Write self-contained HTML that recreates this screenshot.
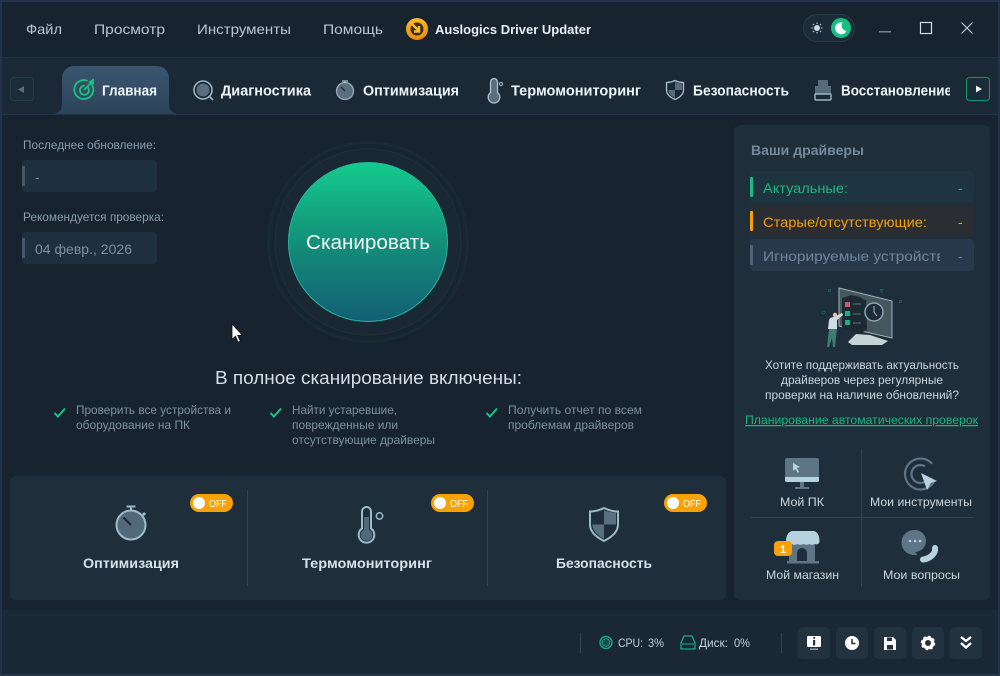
<!DOCTYPE html>
<html lang="ru"><head><meta charset="utf-8"><title>Auslogics Driver Updater</title>
<style>
html,body{margin:0;padding:0;background:#17232e;overflow:hidden}
svg{display:block}
text{font-family:"Liberation Sans",sans-serif;white-space:pre}
</style></head><body>
<svg width="1000" height="676" viewBox="0 0 1000 676" xmlns="http://www.w3.org/2000/svg">
<defs>
<linearGradient id="scan" x1="0" y1="0" x2="0" y2="1"><stop offset="0" stop-color="#14cb8c"/><stop offset="0.55" stop-color="#138a78"/><stop offset="1" stop-color="#135f74"/></linearGradient>
<linearGradient id="tab" x1="0" y1="0" x2="0" y2="1"><stop offset="0" stop-color="#3a5670"/><stop offset="1" stop-color="#2c4459"/></linearGradient>
<linearGradient id="logo" x1="0" y1="0" x2="0" y2="1"><stop offset="0" stop-color="#fdb927"/><stop offset="1" stop-color="#ef8a0c"/></linearGradient>
<clipPath id="c1"><rect x="760" y="240" width="180" height="30"/></clipPath>
<clipPath id="c2"><rect x="835" y="75" width="115" height="30"/></clipPath>
</defs>
<rect width="1000" height="676" fill="#17232e"/>
<!-- tab strip -->
<rect x="0" y="58" width="1000" height="57" fill="#1b2937"/>
<rect x="0" y="57" width="1000" height="1" fill="#213241"/>
<rect x="0" y="114" width="1000" height="1" fill="#213241"/>
<!-- footer -->
<rect x="0" y="610" width="1000" height="66" fill="#1a2734"/>
<!-- window border -->
<rect x="0" y="0" width="1000" height="2" fill="#22324a"/>
<rect x="0" y="0" width="2" height="676" fill="#22324a"/>
<rect x="998" y="0" width="2" height="676" fill="#22324a"/>
<rect x="0" y="674" width="1000" height="2" fill="#22384a"/>

<!-- menu -->
<g font-size="14" fill="#b9c6d2">
<text x="26" y="34" textLength="36" lengthAdjust="spacingAndGlyphs">Файл</text>
<text x="94" y="34" textLength="71" lengthAdjust="spacingAndGlyphs">Просмотр</text>
<text x="197" y="34" textLength="94" lengthAdjust="spacingAndGlyphs">Инструменты</text>
<text x="323" y="34" textLength="60" lengthAdjust="spacingAndGlyphs">Помощь</text>
</g>
<circle cx="417" cy="29" r="11" fill="url(#logo)"/>
<circle cx="417" cy="29" r="6.500" fill="#3a2f20"/>
<path d="M411 23L419 31M419 26V31.500H414" stroke="#fdb927" stroke-width="2.400" fill="none"/>
<text x="435" y="34" font-size="13" font-weight="bold" fill="#e8eef3" textLength="156" lengthAdjust="spacingAndGlyphs">Auslogics Driver Updater</text>

<!-- theme toggle -->
<rect x="803.500" y="14.500" width="51" height="27" rx="13.500" fill="#1c2b38" stroke="#2a3b4a"/>
<circle cx="817" cy="28" r="3" fill="#cfdbe4"/>
<g stroke="#cfdbe4" stroke-width="1"><path d="M817 22.500v1.500M817 32v1.500M811.500 28h1.500M821 28h1.500M813 24l1 1M820 31l1 1M813 32l1-1M820 25l1-1"/></g>
<circle cx="841" cy="28" r="10" fill="#18bd80"/>
<path d="M842.500 22.500a6 6 0 1 0 4 8.500 5.500 5.500 0 0 1-4-8.500z" fill="#fff"/>
<!-- window controls -->
<rect x="879" y="31" width="12" height="1.500" fill="#74848f"/>
<rect x="920.500" y="22.500" width="11" height="11" fill="none" stroke="#d5dde3" stroke-width="1.200"/>
<path d="M961.500 22.500l11 11M972.500 22.500l-11 11" stroke="#c7d1d9" stroke-width="1.100"/>

<!-- tabs -->
<rect x="10.500" y="77.500" width="23" height="23" rx="3" fill="#1b2b37" stroke="#1f4040"/>
<path d="M24 86v7l-6-3.500z" fill="#5a6d7c"/>
<rect x="966.500" y="77.500" width="23" height="23" rx="3" fill="#1b2b37" stroke="#159468"/>
<path d="M976 85.500v7l6-3.500z" fill="#f0f4f7"/>
<path d="M54 114c5-1 8-4 8-10V78a12 12 0 0 1 12-12h83a12 12 0 0 1 12 12v26c0 6 3 9 8 10z" fill="url(#tab)"/>
<g fill="none" stroke="#1cc283" stroke-width="1.800">
<path d="M91.500 84a9.500 9.500 0 1 1-4-3.200"/><path d="M87.500 87a4.500 4.500 0 1 1-3-1.200"/>
<path d="M84 90l8-8M90 82l3-2v3z"/></g>
<circle cx="203" cy="90" r="6.500" fill="#5a6e7d"/><circle cx="203" cy="90" r="9" fill="none" stroke="#9bb5c2" stroke-width="1.600"/><path d="M209.500 96.500l3.500 3.500" stroke="#9bb5c2" stroke-width="1.800"/>
<circle cx="345" cy="91" r="8.500" fill="#5a6e7d" stroke="#93acb9" stroke-width="1.300"/><path d="M342 81h6M345 81v2" stroke="#a9c1cd" stroke-width="1.300"/><path d="M341 87l4 4" stroke="#1b2a36" stroke-width="1.300"/>
<path d="M490.500 82a3.500 3.500 0 0 1 7 0v10.500a5.800 5.800 0 1 1-7 0z" fill="#5a6e7d" stroke="#a9c1cd" stroke-width="1.300"/><circle cx="501" cy="84" r="1.600" fill="none" stroke="#a9c1cd"/>
<path d="M675 80.500c3 1.500 5.500 2 8.500 2v7.500c0 4.500-4 7.500-8.500 9.500c-4.500-2-8.500-5-8.500-9.500v-7.500c3 0 5.500-.5 8.500-2z" fill="#1b2937" stroke="#a9c1cd" stroke-width="1.300"/><path d="M675 82v8h7c.2 0 0-6.500 0-6.500c-3 0-4.500-.6-7-1.500zM675 90v8c-3-1.500-6.500-4-6.800-8z" fill="#566c7c"/>
<path d="M818 80h10v6h-10zM815 86h16v8h-16z" fill="#566c7c"/><rect x="815" y="94" width="16" height="6" rx="1" fill="#1b2937" stroke="#9bb5c2" stroke-width="1.400"/>
<g font-size="14.500" font-weight="bold" fill="#eef3f6">
<text x="102" y="95.500" textLength="55" lengthAdjust="spacingAndGlyphs">Главная</text>
<text x="221" y="95.500" textLength="90" lengthAdjust="spacingAndGlyphs">Диагностика</text>
<text x="363" y="95.500" textLength="96" lengthAdjust="spacingAndGlyphs">Оптимизация</text>
<text x="511" y="95.500" textLength="130" lengthAdjust="spacingAndGlyphs">Термомониторинг</text>
<text x="693" y="95.500" textLength="96" lengthAdjust="spacingAndGlyphs">Безопасность</text>
<g clip-path="url(#c2)"><text x="841" y="95.500" textLength="111" lengthAdjust="spacingAndGlyphs">Восстановление</text></g>
</g>

<!-- left info -->
<text x="23" y="149" font-size="12" fill="#8a9dab" textLength="133" lengthAdjust="spacingAndGlyphs">Последнее обновление:</text>
<rect x="22" y="160" width="135" height="32" rx="4" fill="#1e2f3e"/>
<rect x="22" y="166" width="3" height="20" rx="1" fill="#42596a"/>
<text x="35" y="182" font-size="14" fill="#7d909e">-</text>
<text x="23" y="221" font-size="12" fill="#8a9dab" textLength="141" lengthAdjust="spacingAndGlyphs">Рекомендуется проверка:</text>
<rect x="22" y="232" width="135" height="32" rx="4" fill="#1e2f3e"/>
<rect x="22" y="238" width="3" height="20" rx="1" fill="#42596a"/>
<text x="35" y="254" font-size="14" fill="#7d909e" textLength="97" lengthAdjust="spacingAndGlyphs">04 февр., 2026</text>

<!-- scan -->
<circle cx="368" cy="242" r="99.500" fill="#17252f" stroke="#1a2a34" stroke-width="3"/>
<circle cx="368" cy="242" r="93" fill="#192833" stroke="#1c2e37" stroke-width="1.500"/>
<circle cx="368" cy="242" r="79.500" fill="url(#scan)" stroke="#25b7a1" stroke-width="1"/>
<text x="306" y="249" font-size="20" fill="#f2f7f7" textLength="124" lengthAdjust="spacingAndGlyphs">Сканировать</text>

<!-- cursor -->
<path d="M232 324v15.500l3.500-3.300 2.500 6 2.300-1-2.500-5.800h4.700z" fill="#fff" stroke="#111" stroke-width=".8"/>

<text x="215" y="384" font-size="18" fill="#d5dfe6" textLength="307" lengthAdjust="spacingAndGlyphs">В полное сканирование включены:</text>
<g fill="none" stroke="#1cc283" stroke-width="2"><path d="M54.500 413l3.500 3.500 7-8"/><path d="M270.500 413l3.500 3.500 7-8"/><path d="M486.500 413l3.500 3.500 7-8"/></g>
<g font-size="12" fill="#7e919f">
<text x="76" y="414" textLength="155" lengthAdjust="spacingAndGlyphs">Проверить все устройства и</text>
<text x="76" y="429" textLength="114" lengthAdjust="spacingAndGlyphs">оборудование на ПК</text>
<text x="292" y="414" textLength="105" lengthAdjust="spacingAndGlyphs">Найти устаревшие,</text>
<text x="292" y="429" textLength="106" lengthAdjust="spacingAndGlyphs">поврежденные или</text>
<text x="292" y="444" textLength="143" lengthAdjust="spacingAndGlyphs">отсутствующие драйверы</text>
<text x="508" y="414" textLength="134" lengthAdjust="spacingAndGlyphs">Получить отчет по всем</text>
<text x="508" y="429" textLength="126" lengthAdjust="spacingAndGlyphs">проблемам драйверов</text>
</g>

<!-- feature panel -->
<rect x="10" y="476" width="716" height="124" rx="6" fill="#1e2e3b"/>
<rect x="247" y="490" width="1" height="96" fill="#33444f"/>
<rect x="487" y="490" width="1" height="96" fill="#33444f"/>
<circle cx="131" cy="525" r="14.500" fill="#53697a" stroke="#9cbcc8" stroke-width="2"/>
<path d="M126.500 506.500h9M131 507v3" stroke="#9cbcc8" stroke-width="2"/><path d="M123.500 517.500l7.500 7.500" stroke="#1b2a36" stroke-width="2.200"/><path d="M143 513l2 2" stroke="#9cbcc8" stroke-width="3"/>
<path d="M362 511.500a4.500 4.500 0 0 1 9 0v17a7.800 7.800 0 1 1-9 0z" fill="#1e2e3b" stroke="#9cbcc8" stroke-width="2"/>
<path d="M364 517h5v12.800a5.800 5.800 0 1 1-5 0z" fill="#53697a"/>
<circle cx="379.500" cy="516" r="3.200" fill="none" stroke="#9cbcc8" stroke-width="1.500"/>
<path d="M604 508c5 2.500 9 3.500 14 3.500v13c0 8-7 13-14 16.500c-7-3.500-14-8.500-14-16.500v-13c5 0 9-1 14-3.500z" fill="#1e2e3b" stroke="#9cbcc8" stroke-width="2"/>
<path d="M604 510.500v14h12v-12c-4.500 0-8-.7-12-2zM604 524.500v14.500c-5-3-11-7-11.800-14.500z" fill="#587080"/>
<g font-size="14" font-weight="bold" fill="#d7e1e8">
<text x="83" y="568" textLength="96" lengthAdjust="spacingAndGlyphs">Оптимизация</text>
<text x="302" y="568" textLength="130" lengthAdjust="spacingAndGlyphs">Термомониторинг</text>
<text x="556" y="568" textLength="96" lengthAdjust="spacingAndGlyphs">Безопасность</text>
</g>
<g>
<rect x="190" y="494" width="43" height="18" rx="9" fill="#f9a206"/><circle cx="199" cy="503" r="6" fill="#fff"/><text x="209" y="507" font-size="10" fill="#fff" textLength="18" lengthAdjust="spacingAndGlyphs">OFF</text>
<rect x="431" y="494" width="43" height="18" rx="9" fill="#f9a206"/><circle cx="440" cy="503" r="6" fill="#fff"/><text x="450" y="507" font-size="10" fill="#fff" textLength="18" lengthAdjust="spacingAndGlyphs">OFF</text>
<rect x="664" y="494" width="43" height="18" rx="9" fill="#f9a206"/><circle cx="673" cy="503" r="6" fill="#fff"/><text x="683" y="507" font-size="10" fill="#fff" textLength="18" lengthAdjust="spacingAndGlyphs">OFF</text>
</g>

<!-- right panel -->
<rect x="734" y="125" width="256" height="475" rx="6" fill="#1e2e3b"/>
<text x="751" y="155" font-size="14" font-weight="bold" fill="#728a9c" textLength="113" lengthAdjust="spacingAndGlyphs">Ваши драйверы</text>
<rect x="750" y="171" width="224" height="32" rx="4" fill="#1e3440"/>
<rect x="750" y="177" width="3" height="20" rx="1" fill="#1cbb80"/>
<text x="763" y="193" font-size="14" fill="#1db67f" textLength="85" lengthAdjust="spacingAndGlyphs">Актуальные:</text>
<text x="958" y="193" font-size="14" fill="#1db67f">-</text>
<rect x="750" y="205" width="224" height="32" rx="4" fill="#2a2e33"/>
<rect x="750" y="211" width="3" height="20" rx="1" fill="#f9a206"/>
<text x="763" y="227" font-size="14" fill="#f59f0b" textLength="164" lengthAdjust="spacingAndGlyphs">Старые/отсутствующие:</text>
<text x="958" y="227" font-size="14" fill="#f59f0b">-</text>
<rect x="750" y="239" width="224" height="32" rx="4" fill="#27394a"/>
<rect x="750" y="245" width="3" height="20" rx="1" fill="#4c6475"/>
<g clip-path="url(#c1)"><text x="763" y="261" font-size="14" fill="#6f8698" textLength="190" lengthAdjust="spacingAndGlyphs">Игнорируемые устройства</text></g>
<text x="958" y="261" font-size="14" fill="#6f8698">-</text>

<!-- illustration -->
<path d="M839 288l53 13v37l-53-12z" fill="#44565e" stroke="#a1b2b9" stroke-width="1"/>
<path d="M842 298l7-2 2-1 9 2 3 2 3 1 1 30-6 3-19-4z" fill="#1b2a33"/>
<circle cx="874" cy="312" r="9" fill="#1d2c35" stroke="#8fa7b0" stroke-width="1.500"/><path d="M874 306v6l3 4" stroke="#a9bcc3" fill="none"/>
<rect x="845" y="302" width="5" height="5" fill="#e04f68"/><rect x="845" y="311" width="5" height="5" fill="#15b383"/><rect x="845" y="320" width="5" height="5" fill="#15b383"/>
<path d="M853 304h8M853 314h8M853 323h8" stroke="#5c7078"/>
<path d="M848 342l8-8 14 1 18 6-6 4h-30z" fill="#c8d3d6"/>
<path d="M828 329l1-9q1-3 5-3l8-4 1 2-6 5v9z" fill="#cfdde0"/><circle cx="835" cy="315" r="2.200" fill="#e8c4b0"/>
<path d="M829 329h8l-1 8-1 10h-2l-1-9-3 9h-2z" fill="#3f7c70"/>
<g fill="none" stroke="#1f5753"><rect x="828.500" y="289.500" width="2" height="2"/><rect x="899.500" y="300.500" width="2" height="2"/><path d="M880 289.500h3l-1.500 3z"/><circle cx="823.500" cy="312.500" r="1.500"/></g>

<g font-size="12" fill="#cbd6dd">
<text x="765" y="369" textLength="194" lengthAdjust="spacingAndGlyphs">Хотите поддерживать актуальность</text>
<text x="781" y="384" textLength="162" lengthAdjust="spacingAndGlyphs">драйверов через регулярные</text>
<text x="765" y="399" textLength="194" lengthAdjust="spacingAndGlyphs">проверки на наличие обновлений?</text>
</g>
<text x="745" y="424" font-size="12" fill="#1bb67e" text-decoration="underline" textLength="233" lengthAdjust="spacingAndGlyphs">Планирование автоматических проверок</text>
<rect x="861" y="449" width="1" height="138" fill="#33444f"/>
<rect x="751" y="517" width="222" height="1" fill="#33444f"/>

<rect x="785" y="458" width="34" height="24" rx="2" fill="#5e7585"/>
<path d="M785 477h34v3a2 2 0 0 1-2 2h-30a2 2 0 0 1-2-2z" fill="#b5d2df"/><path d="M800 482h4v5h-4zM795 487h14v2h-14z" fill="#5e7585"/>
<path d="M793 463l7 4-3 1 2 4-1.500 .7-2-3.700-2.500 2z" fill="#b5d2df"/>
<circle cx="920.500" cy="474" r="15.500" fill="none" stroke="#5e7585" stroke-width="2.200" stroke-dasharray="78 20" transform="rotate(30 920.500 474)"/>
<circle cx="920.500" cy="474" r="9" fill="none" stroke="#5e7585" stroke-width="2.200" stroke-dasharray="42 15" transform="rotate(30 920.500 474)"/>
<path d="M921 473l16 8-6 2-4 7z" fill="#b5d2df"/>
<g font-size="12" fill="#cbd6dd">
<text x="780" y="506" textLength="44" lengthAdjust="spacingAndGlyphs">Мой ПК</text>
<text x="870" y="506" textLength="102" lengthAdjust="spacingAndGlyphs">Мои инструменты</text>
<text x="766" y="579" textLength="73" lengthAdjust="spacingAndGlyphs">Мой магазин</text>
<text x="883" y="579" textLength="77" lengthAdjust="spacingAndGlyphs">Мои вопросы</text>
</g>
<!-- store -->
<path d="M789 542h26v19h-26z" fill="#5e7585"/><path d="M787 561h32v2.500h-32z" fill="#5e7585"/>
<path d="M786 541c0-6 3-10 7-10h20c4 0 6.500 4 6.500 10c0 3-2.500 4-4.500 3c-2 1-4 1-5.500 0c-2 1-4 1-6 0c-2 1-4 1-6 0c-2 1-4 1-5.500 0c-2.500 1-6.500 0-6.500-3z" fill="#b5d2df"/>
<path d="M797 561v-8a5 5 0 0 1 10 0v8z" fill="#1e2e3b"/>
<rect x="774" y="541" width="18" height="15" rx="4" fill="#f9a206"/><text x="780" y="553" font-size="11" font-weight="bold" fill="#fff">1</text>
<!-- questions -->
<path d="M915 530a11 11 0 0 1 0 22c1 1 2 2 2 3h-4a11 11 0 0 1 2-25z" fill="#5e7585"/>
<circle cx="910" cy="541" r="1.300" fill="#b5d2df"/><circle cx="915" cy="541" r="1.300" fill="#b5d2df"/><circle cx="920" cy="541" r="1.300" fill="#b5d2df"/>
<path d="M935 548c1 6-6 11-12 11.500" fill="none" stroke="#b5d2df" stroke-width="6" stroke-linecap="round"/>

<!-- status -->
<rect x="580" y="633" width="1" height="20" fill="#33444f"/>
<rect x="781" y="633" width="1" height="20" fill="#33444f"/>
<circle cx="606" cy="642.500" r="6" fill="none" stroke="#19a88a" stroke-width="1.400"/><circle cx="606" cy="642.500" r="3.800" fill="#124b50" stroke="#19a88a"/>
<path d="M684 636h8l3 7v6h-14v-6z" fill="none" stroke="#19a88a" stroke-width="1.300"/><path d="M682 644h12" stroke="#19a88a"/>
<g font-size="12" fill="#c4d0d9">
<text x="618" y="647" textLength="25" lengthAdjust="spacingAndGlyphs">CPU:</text>
<text x="648" y="647" textLength="16" lengthAdjust="spacingAndGlyphs">3%</text>
<text x="699" y="647" textLength="29" lengthAdjust="spacingAndGlyphs">Диск:</text>
<text x="734" y="647" textLength="16" lengthAdjust="spacingAndGlyphs">0%</text>
</g>
<g fill="#22323f">
<rect x="798" y="627" width="32" height="32" rx="5"/><rect x="836" y="627" width="32" height="32" rx="5"/><rect x="874" y="627" width="32" height="32" rx="5"/><rect x="912" y="627" width="32" height="32" rx="5"/><rect x="950" y="627" width="32" height="32" rx="5"/>
</g>
<rect x="807" y="636" width="14" height="11" rx="1" fill="#fff"/><path d="M810 648.500h8v1.500h-8z" fill="#8a98a2"/>
<rect x="813.300" y="637" width="1.800" height="1.800" fill="#22323f"/><rect x="813" y="640" width="2.200" height="5.500" fill="#22323f"/>
<circle cx="852" cy="643" r="7" fill="#fff"/><path d="M852 639v4.500h3.500" fill="none" stroke="#22323f" stroke-width="1.500"/>
<path d="M884 637h9l3 3v10h-12z" fill="#fff"/><rect x="887" y="637.500" width="5" height="3.500" fill="#22323f"/><rect x="887" y="645" width="6" height="4.500" fill="#22323f"/>
<circle cx="928" cy="643" r="4.700" fill="none" stroke="#fff" stroke-width="3.400"/><circle cx="928" cy="643" r="6.500" fill="none" stroke="#fff" stroke-width="1.500" stroke-dasharray="2.500 2.600"/>
<path d="M961 637l5 4 5-4M961 643l5 4.500 5-4.500" fill="none" stroke="#fff" stroke-width="2.400"/>
</svg>
</body></html>
